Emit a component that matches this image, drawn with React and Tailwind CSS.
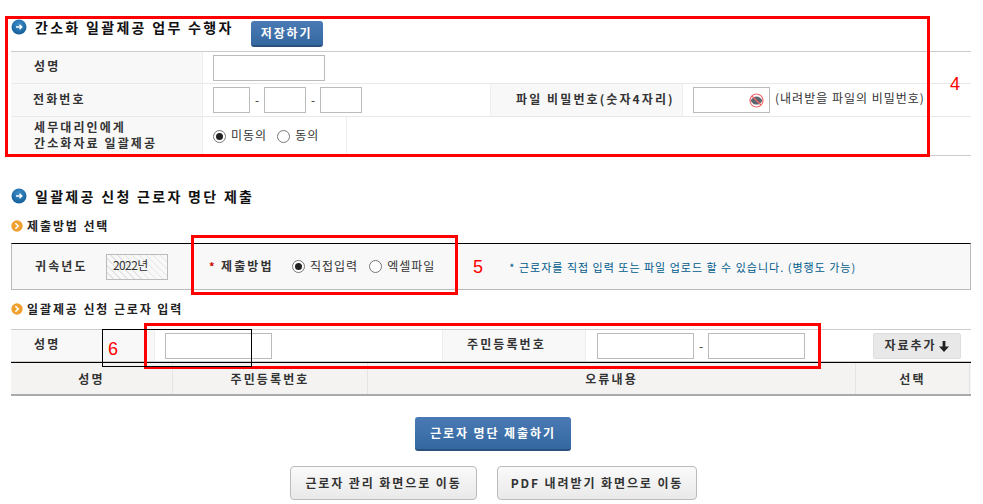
const labelText = "text-[12px] font-bold tracking-[2.1px] text-[#333] leading-[16px]";
const box = "h-[26px] border border-[#bbb] bg-white";

function BlueBullet() {
  return (
    <svg width="16" height="16" viewBox="0 0 16 16" className="shrink-0">
      <defs>
        <radialGradient id="blueBall" cx="50%" cy="35%" r="70%">
          <stop offset="0%" stopColor="#3f8fc9" />
          <stop offset="100%" stopColor="#125a96" />
        </radialGradient>
      </defs>
      <circle cx="8" cy="8" r="7.5" fill="url(#blueBall)" />
      <path d="M5 8h5.5M8.5 5.8 10.8 8l-2.3 2.2" fill="none" stroke="#fff" strokeWidth="1.4" />
    </svg>
  );
}

function OrangeBullet() {
  return (
    <svg width="12" height="12" viewBox="0 0 12 12" className="shrink-0">
      <circle cx="6" cy="6" r="5.7" fill="#f0a030" />
      <path d="M4.4 3.2 7.2 6 4.4 8.8" fill="none" stroke="#fff" strokeWidth="1.6" />
    </svg>
  );
}

function Radio({ checked, label }) {
  return (
    <span className="flex items-center">
      <span className="flex h-[13px] w-[13px] items-center justify-center rounded-full border border-[#777] bg-white">
        {checked && <span className="h-[7px] w-[7px] rounded-full bg-[#222]" />}
      </span>
      <span className="ml-[5px] -translate-y-[1px] text-[12px] tracking-[1px] text-[#333]">{label}</span>
    </span>
  );
}

function EyeOff() {
  return (
    <svg width="15" height="15" viewBox="0 0 15 15" className="absolute right-[5px] top-[5px]">
      <path d="M1.6 7.5C3.2 4.4 5.2 3.4 7.5 3.4s4.3 1 5.9 4.1c-1.6 3.1-3.6 4.1-5.9 4.1S3.2 10.6 1.6 7.5z" fill="#5b6570" />
      <circle cx="7.5" cy="7.5" r="6.5" fill="none" stroke="#f4686e" strokeWidth="1.2" />
      <path d="M3 3l9 9" stroke="#f4686e" strokeWidth="1.2" />
    </svg>
  );
}

function BlueButton({ className, children }) {
  return (
    <button className={`rounded-[3px] border-b-2 border-[#2a5080] bg-gradient-to-b from-[#4a7ab5] to-[#34689f] text-[12px] font-bold tracking-[1.9px] text-white ${className}`}>
      {children}
    </button>
  );
}

function GrayButton({ className, children }) {
  return (
    <button className={`h-[34px] rounded-[4px] border border-[#bbb] bg-gradient-to-b from-[#fafafa] to-[#e9e9e9] text-[12px] font-bold tracking-[1.9px] text-[#333] ${className}`}>
      {children}
    </button>
  );
}

function Heading({ children, className }) {
  return (
    <h2 className={`flex items-center gap-[8px] pl-[11px] text-[14px] font-bold tracking-[2.3px] text-[#111] ${className}`}>
      <BlueBullet />
      {children}
    </h2>
  );
}

function SubHeading({ children, className }) {
  return (
    <h3 className={`flex items-center gap-[4px] pl-[11px] text-[12px] font-bold tracking-[1.9px] text-[#222] ${className}`}>
      <OrangeBullet />
      {children}
    </h3>
  );
}

function Mark({ className }) {
  return <div className={`pointer-events-none absolute border-[3px] border-[#f00] ${className}`} />;
}

function Num({ className, children }) {
  return <span className={`absolute text-[18px] leading-none text-[#f00] font-['Liberation_Sans',sans-serif] ${className}`}>{children}</span>;
}

export default function App() {
  return (
    <div className="relative h-[504px] w-[983px] overflow-hidden bg-white font-['Noto_Sans_CJK_KR',sans-serif]">
      {/* 간소화 일괄제공 */}
      <div className="flex h-[51px] items-start">
        <Heading className="mt-[18px] leading-[18px]">간소화 일괄제공 업무 수행자</Heading>
        <BlueButton className="ml-[17px] mt-[21px] h-[26px] w-[72px]">저장하기</BlueButton>
      </div>

      <div className="ml-[11px] w-[960px] border-t border-b border-t-[#ccc] border-b-[#ccc]">
        <div className="flex h-[32px] border-b border-[#e8e8e8]">
          <div className={`flex w-[192px] items-center border-r border-[#eee] bg-[#f8f8f8] pb-[3px] pl-[23px] ${labelText}`}>성명</div>
          <div className="flex items-center pl-[10px]">
            <div className={`${box} w-[112px]`} />
          </div>
        </div>
        <div className="flex h-[33px] border-b border-[#e8e8e8]">
          <div className={`flex w-[192px] items-center border-r border-[#eee] bg-[#f8f8f8] pb-[3px] pl-[22px] ${labelText}`}>전화번호</div>
          <div className="flex w-[287px] items-center pl-[10px] text-[12px] text-[#333]">
            <div className={`${box} w-[37px]`} />
            <span className="w-[14px] text-center">-</span>
            <div className={`${box} w-[42px]`} />
            <span className="w-[14px] text-center">-</span>
            <div className={`${box} w-[42px]`} />
          </div>
          <div className={`flex w-[193px] items-center whitespace-nowrap border-x border-[#eee] bg-[#f8f8f8] pb-[3px] pl-[25px] ${labelText}`}>파일 비밀번호(숫자4자리)</div>
          <div className="flex items-center pl-[10px]">
            <div className={`${box} relative w-[77px]`}>
              <EyeOff />
            </div>
            <span className="ml-[5px] -translate-y-[2px] whitespace-nowrap text-[12px] tracking-[1px] text-[#333]">(내려받을 파일의 비밀번호)</span>
          </div>
        </div>
        <div className="flex h-[38px]">
          <div className={`w-[192px] border-r border-[#eee] bg-[#f8f8f8] pl-[23px] pt-[2px] ${labelText}`}>
            세무대리인에게
            <br />
            간소화자료 일괄제공
          </div>
          <div className="flex w-[144px] items-center gap-[10px] border-r border-[#eee] pl-[10px]">
            <Radio checked label="미동의" />
            <Radio label="동의" />
          </div>
        </div>
      </div>

      {/* 일괄제공 신청 근로자 명단 제출 */}
      <Heading className="mt-[31px] h-[18px]">일괄제공 신청 근로자 명단 제출</Heading>
      <SubHeading className="mt-[12px] h-[18px]">제출방법 선택</SubHeading>

      <div className="ml-[11px] mt-[8px] flex h-[47px] w-[960px] items-center border border-t-black border-x-[#bbb] border-b-[#bbb] bg-[#f8f8f8]">
        <span className={`ml-[23px] w-[71px] -translate-y-[1px] ${labelText}`}>귀속년도</span>
        <div className="flex h-[26px] w-[62px] items-center border border-[#bbb] bg-[repeating-linear-gradient(45deg,#f8f8f8,#f8f8f8_4px,#e4e4e4_4px,#e4e4e4_5px)] pb-[3px] pl-[6px] text-[12px] tracking-[-0.6px] text-[#333]">
          2022년
        </div>
        <span className="ml-[41px] w-[12px] text-[11px] font-bold text-[#c00]">*</span>
        <span className={`w-[71px] -translate-y-[1px] ${labelText}`}>제출방법</span>
        <Radio checked label="직접입력" />
        <span className="w-[11px]" />
        <Radio label="엑셀파일" />
        <span className="ml-[74px] translate-y-[1px] whitespace-nowrap text-[11px] tracking-[1px] text-[#005a8c]">* 근로자를 직접 입력 또는 파일 업로드 할 수 있습니다. (병행도 가능)</span>
      </div>

      <SubHeading className="mt-[10px] h-[18px]">일괄제공 신청 근로자 입력</SubHeading>

      {/* 입력 행 */}
      <div className="ml-[11px] mt-[11px] flex h-[33px] w-[960px] border-t border-b border-t-[#ccc] border-b-[#ccc]">
        <div className={`flex w-[143px] items-center bg-[#f8f8f8] pb-[3px] pl-[23px] ${labelText}`}>성명</div>
        <div className="flex w-[288px] items-center border-l border-[#eee] pl-[10px]">
          <div className={`${box} w-[107px]`} />
        </div>
        <div className={`flex w-[144px] items-center border-x border-[#eee] bg-[#f8f8f8] pb-[3px] pl-[24px] ${labelText}`}>주민등록번호</div>
        <div className="flex items-center pl-[11px] text-[12px] text-[#333]">
          <div className={`${box} w-[97px]`} />
          <span className="w-[14px] text-center">-</span>
          <div className={`${box} w-[97px]`} />
        </div>
        <button className="ml-[68px] mt-[3px] flex h-[26px] w-[88px] items-center justify-center gap-[3px] rounded-[2px] border border-[#ddd] bg-[#e8e8e8] pb-[2px] text-[12px] font-bold tracking-[1.9px] text-[#333]">
          자료추가
          <svg width="10" height="11" viewBox="0 0 10 11" className="mt-[2px]">
            <path d="M3.6 0h2.8v5.5H10L5 11 0 5.5h3.6z" fill="#222" />
          </svg>
        </button>
      </div>

      {/* 목록 머리글 */}
      <div className={`ml-[11px] flex h-[34px] w-[960px] border-t border-b-2 border-t-black border-b-[#aaa] bg-[#f4f3f2] ${labelText}`}>
        <div className="flex w-[162px] items-center justify-center border-r border-[#e4e4e4]">성명</div>
        <div className="flex w-[195px] items-center justify-center border-r border-[#e4e4e4]">주민등록번호</div>
        <div className="flex w-[488px] items-center justify-center border-r border-[#e4e4e4]">오류내용</div>
        <div className="flex w-[114px] items-center justify-center border-r border-[#e4e4e4]">선택</div>
      </div>

      <div className="ml-[415px] mt-[21px]">
        <BlueButton className="h-[34px] w-[156px]">근로자 명단 제출하기</BlueButton>
      </div>
      <div className="ml-[290px] mt-[15px] flex gap-[20px]">
        <GrayButton className="w-[187px]">근로자 관리 화면으로 이동</GrayButton>
        <GrayButton className="w-[200px]">PDF 내려받기 화면으로 이동</GrayButton>
      </div>

      {/* 표시 상자 */}
      <Mark className="left-[5px] top-[16px] h-[141px] w-[925px]" />
      <Mark className="left-[191px] top-[235px] h-[60px] w-[267px]" />
      <Mark className="left-[144px] top-[323px] h-[46px] w-[677px]" />
      <div className="pointer-events-none absolute left-[102px] top-[329px] h-[38px] w-[150px] border border-black" />
      <Num className="left-[950px] top-[75px]">4</Num>
      <Num className="left-[473px] top-[258px]">5</Num>
      <Num className="left-[108px] top-[340px]">6</Num>
    </div>
  );
}
